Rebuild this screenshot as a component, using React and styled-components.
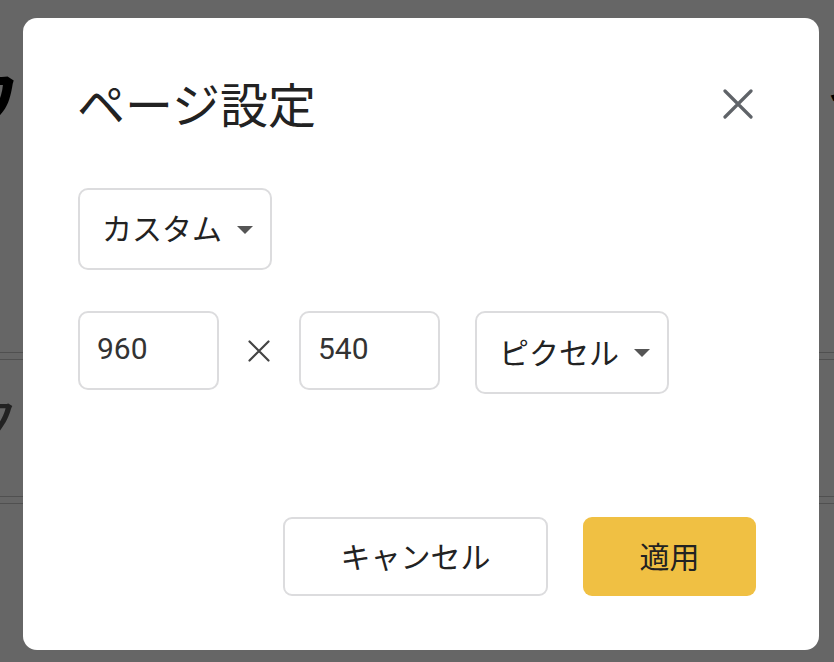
import React from 'react';
import styled, { createGlobalStyle } from 'styled-components';

const GlobalStyle = createGlobalStyle`
  html, body {
    margin: 0;
    padding: 0;
    background: #ffffff;
    overflow: hidden;
  }
  body {
    font-family: Roboto, 'Noto Sans CJK JP', sans-serif;
    color: #222;
  }
`;

export default function App() {
  return (
    <>
      <GlobalStyle />
      <Page>
        <Hero>
          <HeroTitle>ワ</HeroTitle>
          <HeroSide>
            <span>イ</span>
            <span>ト</span>
          </HeroSide>
        </Hero>
        <Divider />
        <Section>
          <SectionTitle>ク</SectionTitle>
        </Section>
        <Divider />
      </Page>

      <Overlay>
        <Dialog>
          <Header>
            <Title>ページ設定</Title>
            <CloseButton aria-label="閉じる">
              <svg width="30" height="30" viewBox="0 0 30 30">
                <path d="M2 2 L28 28 M28 2 L2 28" stroke="#5f6368" strokeWidth="3.2" strokeLinecap="round" />
              </svg>
            </CloseButton>
          </Header>

          <PresetRow>
            <Select>
              <Label>カスタム</Label>
              <Caret />
            </Select>
          </PresetRow>

          <SizeRow>
            <Input>960</Input>
            <Times>
              <svg width="22" height="22" viewBox="0 0 22 22">
                <path d="M1.5 1.5 L20.5 20.5 M20.5 1.5 L1.5 20.5" stroke="#444" strokeWidth="2.2" strokeLinecap="round" />
              </svg>
            </Times>
            <Input>540</Input>
            <Select $tall>
              <Label>ピクセル</Label>
              <Caret />
            </Select>
          </SizeRow>

          <Footer>
            <Button>キャンセル</Button>
            <Button $primary>適用</Button>
          </Footer>
        </Dialog>
      </Overlay>
    </>
  );
}

const Page = styled.div`
  width: 834px;
  height: 662px;
  overflow: hidden;
  display: flex;
  flex-direction: column;
`;

const Hero = styled.div`
  height: 352px;
  padding-top: 62px;
  box-sizing: border-box;
  display: flex;
  justify-content: space-between;
  align-items: flex-start;
  overflow: hidden;
`;

const HeroTitle = styled.h1`
  margin: 0 0 0 -44px;
  font-size: 64px;
  line-height: 80px;
  font-weight: 700;
  color: #000;
`;

const HeroSide = styled.div`
  margin: 12px -38px 0 0;
  display: flex;
  flex-direction: column;
  font-size: 44px;
  line-height: 48px;
  font-weight: 700;
  color: #000;
`;

const Divider = styled.div`
  height: 6px;
  border-top: 1px solid #c8c8c8;
  border-bottom: 1px solid #c8c8c8;
`;

const Section = styled.div`
  height: 136px;
  display: flex;
  align-items: center;
  overflow: hidden;
`;

const SectionTitle = styled.div`
  margin: 0 0 22px -40px;
  font-size: 60px;
  color: #555;
`;

const Overlay = styled.div`
  position: fixed;
  inset: 0;
  background: rgba(0, 0, 0, 0.6);
  display: flex;
  align-items: flex-start;
  padding: 18px 0 0 23px;
`;

const Dialog = styled.div`
  width: 796px;
  height: 632px;
  box-sizing: border-box;
  background: #fff;
  border-radius: 14px;
  padding: 56px 63px 54px 55px;
  display: flex;
  flex-direction: column;
`;

const Header = styled.div`
  height: 56px;
  display: flex;
  align-items: center;
  justify-content: space-between;
`;

const Title = styled.h2`
  margin: 0 0 0 -1px;
  font-family: 'Noto Sans CJK JP', sans-serif;
  font-size: 48px;
  line-height: 56px;
  font-weight: 400;
  color: #222;
`;

const CloseButton = styled.button`
  width: 36px;
  height: 36px;
  margin-top: 4px;
  padding: 0;
  border: none;
  background: none;
  display: flex;
  align-items: center;
  justify-content: center;
  cursor: pointer;
`;

const PresetRow = styled.div`
  margin-top: 58px;
  display: flex;
`;

const SizeRow = styled.div`
  margin-top: 41px;
  display: flex;
  align-items: flex-start;
`;

const Select = styled.div`
  height: ${(p) => (p.$tall ? '83px' : '82px')};
  box-sizing: border-box;
  border: 2px solid #dcdcde;
  border-radius: 10px;
  padding: 0 17px 0 22px;
  display: flex;
  align-items: center;
  gap: 15px;
  margin-left: ${(p) => (p.$tall ? '35px' : '0')};
`;

const Label = styled.span`
  font-family: 'Noto Sans CJK JP', sans-serif;
  font-size: 30px;
  line-height: 36px;
  margin-bottom: 4px;
  color: #222;
`;

const Caret = styled.span`
  width: 0;
  height: 0;
  border-left: 8px solid transparent;
  border-right: 8px solid transparent;
  border-top: 8px solid #555;
  margin-top: 1px;
`;

const Input = styled.div`
  width: 141px;
  height: 79px;
  box-sizing: border-box;
  border: 2px solid #dcdcde;
  border-radius: 10px;
  padding: 0 0 3px 17px;
  display: flex;
  align-items: center;
  font-size: 30px;
  line-height: 36px;
  color: #333;
`;

const Times = styled.div`
  width: 80px;
  height: 79px;
  display: flex;
  align-items: center;
  justify-content: center;
`;

const Footer = styled.div`
  margin-top: auto;
  display: flex;
  justify-content: flex-end;
  gap: 35px;
`;

const Button = styled.button`
  height: 79px;
  width: ${(p) => (p.$primary ? '173px' : '265px')};
  box-sizing: border-box;
  padding: 0 0 4px;
  border: ${(p) => (p.$primary ? 'none' : '2px solid #dcdcde')};
  background: ${(p) => (p.$primary ? '#f0c043' : '#fff')};
  border-radius: 9px;
  font-family: 'Noto Sans CJK JP', sans-serif;
  font-size: 30px;
  line-height: 36px;
  color: #222;
  cursor: pointer;
`;
